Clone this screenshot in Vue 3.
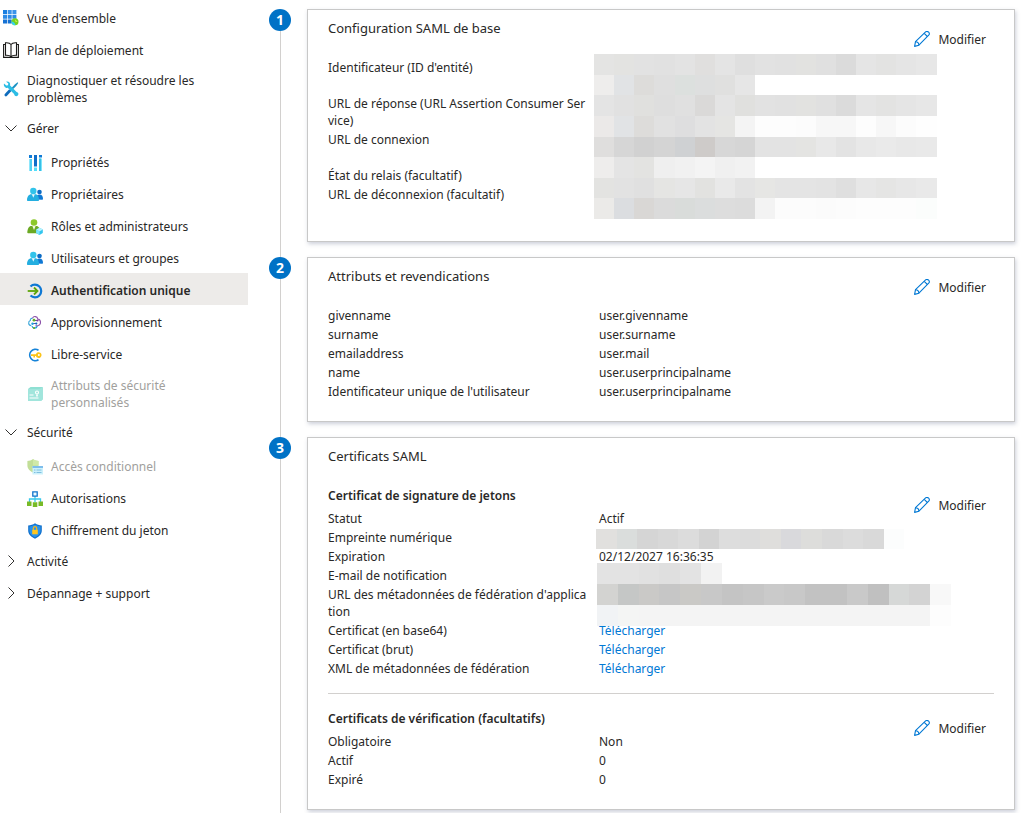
<script setup>
const menu = [
  { label: "Vue d'ensemble", icon: 'grid' },
  { label: 'Plan de déploiement', icon: 'book' },
  { label: 'Diagnostiquer et résoudre les problèmes', icon: 'tools' },
  {
    label: 'Gérer',
    open: true,
    items: [
      { label: 'Propriétés', icon: 'props' },
      { label: 'Propriétaires', icon: 'people' },
      { label: 'Rôles et administrateurs', icon: 'admin' },
      { label: 'Utilisateurs et groupes', icon: 'people' },
      { label: 'Authentification unique', icon: 'sso', active: true },
      { label: 'Approvisionnement', icon: 'provision' },
      { label: 'Libre-service', icon: 'key' },
      { label: 'Attributs de sécurité personnalisés', icon: 'card', disabled: true }
    ]
  },
  {
    label: 'Sécurité',
    open: true,
    items: [
      { label: 'Accès conditionnel', icon: 'access', disabled: true },
      { label: 'Autorisations', icon: 'tree' },
      { label: 'Chiffrement du jeton', icon: 'shield' }
    ]
  },
  { label: 'Activité', open: false, items: [] },
  { label: 'Dépannage + support', open: false, items: [] }
]

function cells(xs, y, height, colors) {
  return colors.split(' ').map((c, i) => ({ x: xs[i], y, w: xs[i + 1] - xs[i], h: height, fill: '#' + c }))
}

const baseX = [0, 20, 40, 60, 81, 101, 121, 141, 161, 181, 202, 222, 242, 262, 282, 302, 322, 343]
const certX = [2, 23, 43, 64, 84, 105, 125, 146, 166, 187, 207, 228, 249, 269, 290, 310]
const urlX = [3, 24, 45, 65, 86, 107, 128, 149, 170, 190, 211, 232, 253, 274, 295, 315, 336, 357]

const baseMask = [
  ...cells(baseX, 0, 21, 'e4e4e3 e3e3e1 e2e2e2 e1e1e1 e3e3e3 e0dfde e4e4e4 dfdfdf e2e2e2 e1e1e1 e2e2e0 e0e0e0 dbdbdb e5e5e5 e3e3e2 e5e5e5 e7e7e7'),
  ...cells(baseX, 21, 20, 'eeedec e1e3e5 dddcda dfdfdf dce0de dedfdf e0e0df e6e6e6 ffffff ffffff ffffff ffffff ffffff ffffff ffffff ffffff ffffff'),
  ...cells(baseX, 41, 21, 'e4e4e4 e1e1e1 e0e0de dedede e0e0e0 dad9d8 e4e4e4 e0e0de e2e2e2 e1e1e1 e2e2e0 e0e0e0 dbdbdb e5e5e5 e3e3e2 e5e5e5 e7e7e7'),
  ...cells(baseX, 62, 21, 'ebe9e8 e1e3e5 dddcda e1e1e1 dededf e3e3e3 e5e5e3 f4f4f4 fdfdfd fdfdfd fcfcfc f7f7f7 f7f7f7 fdfdfd f7f7f7 fcfcfc fefefe'),
  ...cells(baseX, 83, 20, 'dfdedd d6d6d6 d1d1d1 d4d4d4 cfd1d3 cecbc9 d7d7d7 d5d5d5 e3e3e3 e3e3e3 e4e4e2 e8e8e8 e3e3e3 e8e8e8 eaeaea e8e8e8 e9e9e9'),
  ...cells(baseX, 103, 21, 'eeedec e4e4e4 e3e3e1 efefef f1f1f1 f4f4f4 f0f0f0 f2f2f2 ffffff ffffff ffffff ffffff ffffff ffffff ffffff ffffff ffffff'),
  ...cells(baseX, 124, 20, 'e3e3e1 e2e2e2 e0e0e0 e5e5e3 e6e6e6 e2e2e0 e9e9e9 e3e3e3 e6e6e4 e4e4e4 e4e4e4 e3e3e3 dfdfdf e7e7e7 e5e5e4 e7e7e7 e9e9e9'),
  ...cells(baseX, 144, 21, 'ebeae8 dbdde0 d9d7d5 dbdbdb d9dcda dbdddd dddddd dcdcdc f3f3f3 fcfcfc fcfcfc fbfbfb fcfcfc fdfdfd fdfdfd fdfdfd fbfdfc')
]
const certMask = [
  ...cells(certX, 0, 20, 'e1e0de dadddc d5d5d5 d8d8d8 dcdcdc d3d3d3 dddddd dcdcdc dfdedc d9d9dc dddddb d9d9d9 dcdcdc d9d9d9 fcfdfd'),
  ...cells(urlX, 34, 21, 'e3e3e3 e3e3e3 e1e1e1 dfdfdf e3e3e3 f2f2f2'),
  ...cells(urlX, 55, 21, 'd3d3d1 c5c7c6 cac9c7 c6c6c6 cac9c6 c8c8c8 c4c4c4 c6c6c6 cacaca c8c8c8 c2c2c2 c2c2c2 c9c9c9 c0c0c0 d6d8d7 d3d3d3 f8f8f8'),
  ...cells(urlX, 76, 21, 'f1f3f5 f4f5f4 f4f4f4 f4f4f4 f4f4f4 f4f4f4 f4f4f4 f4f4f4 f4f4f4 f4f4f4 f4f4f4 f4f4f4 f4f4f4 f4f4f4 f4f4f4 f4f4f4 fdfdfd')
]

const steps = [
  {
    mask: { name: 'mask-base', width: 343, height: 165, cells: baseMask },
    sections: [
      {
        title: 'Configuration SAML de base',
        rows: [
          { label: "Identificateur (ID d'entité)", tall: true },
          { label: 'URL de réponse (URL Assertion Consumer Service)' },
          { label: 'URL de connexion', tall: true },
          { label: 'État du relais (facultatif)' },
          { label: 'URL de déconnexion (facultatif)', tall: true }
        ]
      }
    ]
  },
  {
    sections: [
      {
        title: 'Attributs et revendications',
        rows: [
          { label: 'givenname', value: 'user.givenname' },
          { label: 'surname', value: 'user.surname' },
          { label: 'emailaddress', value: 'user.mail' },
          { label: 'name', value: 'user.userprincipalname' },
          { label: "Identificateur unique de l'utilisateur", value: 'user.userprincipalname' }
        ]
      }
    ]
  },
  {
    heading: 'Certificats SAML',
    mask: { name: 'mask-cert', width: 357, height: 97, cells: certMask },
    sections: [
      {
        subtitle: 'Certificat de signature de jetons',
        rows: [
          { label: 'Statut', value: 'Actif' },
          { label: 'Empreinte numérique' },
          { label: 'Expiration', value: '02/12/2027 16:36:35' },
          { label: 'E-mail de notification' },
          { label: "URL des métadonnées de fédération d'application" },
          { label: 'Certificat (en base64)', link: 'Télécharger' },
          { label: 'Certificat (brut)', link: 'Télécharger' },
          { label: 'XML de métadonnées de fédération', link: 'Télécharger' }
        ]
      },
      {
        subtitle: 'Certificats de vérification (facultatifs)',
        rows: [
          { label: 'Obligatoire', value: 'Non' },
          { label: 'Actif', value: '0' },
          { label: 'Expiré', value: '0' }
        ]
      }
    ]
  }
]

const icons = {
  grid: `<g fill="#1b7fe0"><path d="M0 0h4v4H0z"/><path d="M4.700 0h4v4h-4zM9.400 0h4v4h-4z" fill="#3a93ea"/><path d="M0 4.700h4v4H0zM4.700 4.700h4v4h-4zM9.400 4.700h4v4h-4z" fill="#2c8ae6"/><path d="M0 9.400h4v4H0zM4.700 9.400h4v4h-4z" fill="#1672d4"/></g><circle cx="12" cy="11.800" r="3.500" fill="#76d31f"/><path d="M8.500 11.400c2 .2 3.800 1.600 4 3.900-2 .4-4.200-1.500-4-3.900z" fill="#32d4f5"/><path d="M11.800 9.500l2.800 2.300-1.900.2z" fill="#d4f35c"/>`,
  book: `<g fill="none" stroke="#1b1a19" stroke-width="1.1"><path d="M8 2.500C7 1 5 .6 2.500.8v12.500c2.500-.2 4.500.2 5.500 1.500 1-1.300 3-1.700 5.500-1.500V.8C11 .6 9 1 8 2.500zM8 2.500v12.300"/><path d="M2.500 2.500H.6v12.900h14.800V2.500h-1.900"/></g>`,
  tools: `<path d="M14.500 1.200l.7.800-2 3-5.600 5.500-1.300-1.300 5.500-5.600z" fill="#1b93c5"/><path d="M6.200 8.300l2 2-4.400 4.800c-1.400 1-3-.7-2-2z" fill="#0f6cbd"/><path d="M1 2.400l2.300 2.200L5 4.200 5.300 2.500 3.200.7c2.300-.7 4.500 1.200 3.900 3.700l6.500 6.500c1.800.1 2.400 2.300 1.200 3.700-1.500 1.200-3.700.4-3.700-1.500L4.700 6.800C2.500 7.400.2 5 1 2.400z" fill="#2dbde5"/>`,
  props: `<path d="M2 0h3v3H2zM12 0h3v2.500h-3z" fill="#0f7ad6"/><path d="M2 4h3v12H2z" fill="#8ee6fb"/><path d="M3 4h2v12H3z" fill="#4fd0f3"/><path d="M7 0h3v11.500H7z" fill="#0f6fc9"/><path d="M7 12.500h3V16H7z" fill="#50e0fb"/><path d="M12 3.500h3V16h-3z" fill="#7ee5fb"/><path d="M12 3.500h2V16h-2z" fill="#38bfe6"/>`,
  people: `<circle cx="12.500" cy="5" r="2.300" fill="#0b6bc5"/><path d="M8.500 12.500c0-3 1.500-5 4-5s3.500 2 3.500 4.300c0 .6-.4 1-1 1z" fill="#0f78d4"/><circle cx="6.300" cy="4" r="3.200" fill="#32c3ea"/><path d="M0 13c0-3.500 2-5.800 4.200-5.800h4c2.500 0 3.800 2.500 3.800 5.800 0 .600-.4 1-1 1H1c-.6 0-1-.4-1-1z" fill="#24aee0"/><path d="M4.800 7.200h3l-1.500 3.600z" fill="#e6faff"/>`,
  admin: `<circle cx="7" cy="3.500" r="3.300" fill="#8cc92b"/><path d="M.3 13.500c0-3.800 1.800-6.500 4-6.500h4.900c2.500 0 3.800 2.700 3.800 6 0 .9-.4 1.300-1 1.300H1.100c-.5 0-.8-.3-.8-.8z" fill="#6ba923"/><path d="M5.300 7h3.400L7 11z" fill="#eff9df"/><path d="M12.500 8.800l3.300 1.800v3.500L12.500 16l-3.300-1.900v-3.500z" fill="#32c5ee"/><path d="M9.200 10.600l3.300-1.800 3.300 1.800-3.300 1.900z" fill="#b8f3ff"/><path d="M9.200 10.600l3.300 1.900V16l-3.300-1.900z" fill="#7fe4fb"/>`,
  sso: `<path d="M3.500 3.500a6.300 6.300 0 1 1 0 9" fill="none" stroke="#0f78d4" stroke-width="2.200"/><path d="M.7 8h9" stroke="#5ea50b" stroke-width="1.800"/><path d="M7 4.500L10.500 8 7 11.500" fill="none" stroke="#5ea50b" stroke-width="1.800"/>`,
  provision: `<g fill="none" stroke-width="1.100"><path d="M5.500 3.500C3.500 3 3.200 4.500 3.300 5.600 1 6.500 1 10.500 4.300 10.600" stroke="#38a5d8"/><path d="M5.500 3.300C6.500.8 10.300 1 10.800 4c3.200.2 3.700 5.200.7 6.600-1 .4-2 .3-3 .3" stroke="#8a4fa8"/><path d="M6.500 5.500h3.500M5.500 8.500h4" stroke="#5c4ea5"/><path d="M5 11c.4 2.700 4.500 3 5.300 0" stroke="#219bd8"/></g><circle cx="7" cy="5.200" r="1.400" fill="#62ad24"/><circle cx="10.500" cy="5.500" r="1.100" fill="#843a9c"/><circle cx="5.500" cy="8.700" r="1.200" fill="#21a5df"/><circle cx="9.300" cy="8.600" r="1.100" fill="#0871c4"/><circle cx="7" cy="13" r="1.100" fill="#62ad24"/>`,
  key: `<path d="M11.500 3.200A5.700 5.700 0 1 0 11.500 12.800" fill="none" stroke="#1683d8" stroke-width="1.700"/><path d="M4 7.200h4.900A2.900 2.900 0 1 1 8.900 9H8v1.500H6.400V9H4z" fill="#fbc318"/><circle cx="11.900" cy="8.100" r="1" fill="#fff"/>`,
  card: `<g opacity=".55"><path d="M3.500 1h11.300c.6 0 1 .4 1 1v11.300L14 15H2c-.6 0-1-.4-1-1V3z" fill="#35c7b0"/><path d="M1 3h11.700L15.800 1v12.300L14 15H2c-.6 0-1-.4-1-1z" fill="#56d0c0"/></g><circle cx="10" cy="6.500" r="1.500" fill="none" stroke="#fff" stroke-width="1.100"/><path d="M9.200 8.400v2.400l.8-.6.800.6V8.400z" fill="#fff"/><path d="M2.500 9h4M2.500 12h9" stroke="#fff" stroke-width="1.200"/>`,
  access: `<g opacity=".5"><path d="M6 0c2 1.500 3.500 1.900 5.500 2v4.500c0 3.300-2.600 5.500-5.500 7-3-1.500-5.600-3.700-5.600-7V2C2.500 1.900 4 1.500 6 0z" fill="#86bf34"/><path d="M6 0c2 1.500 3.500 1.900 5.500 2v4.500H6z" fill="#a3d554"/></g><path d="M5.500 7h10.500v8.500H5.500z" fill="#cdf1fb"/><path d="M5.500 7h10.500v2H5.500z" fill="#7dbdec"/><path d="M7 11h1.500M9.500 11h5M7 13.500h1.500M9.500 13.500h5" stroke="#7fbfe0"/>`,
  tree: `<path d="M8 5v6M2.500 11V8h11v3" fill="none" stroke="#39c9eb" stroke-width="1.300"/><path d="M5.800.8h4.400v4.400H5.800z" fill="#eefaff" stroke="#0f73cc" stroke-width="1.300"/><path d="M0 10.500h4.500V15H0zM5.800 11.300h4.500V16H5.800zM11.500 10.500H16V15h-4.500z" fill="#78ba27"/>`,
  shield: `<path d="M8 .2c2 1.500 4.200 2.100 6.800 2.200v5.200c0 4-3.400 6.600-6.800 8.200C4.600 14.200 1.200 11.600 1.200 7.600V2.400C3.800 2.300 6 1.700 8 .2z" fill="#0f6fcb"/><path d="M8 1.500c1.800 1.200 3.700 1.700 5.600 1.900v4.200c0 3.300-2.800 5.500-5.600 6.900-2.800-1.400-5.600-3.600-5.600-6.900V3.400C4.300 3.200 6.200 2.700 8 1.500z" fill="#2a93ec"/><path d="M6.300 7V5.300a1.700 1.700 0 0 1 3.400 0V7" fill="none" stroke="#f7b718" stroke-width="1.200"/><path d="M5.200 6.800h5.600v4.500H5.200z" fill="#ffc61f"/>`
}
</script>

<template>
  <div class="page">
    <nav class="sidebar" aria-label="Menu de l'application">
      <template v-for="entry in menu" :key="entry.label">
        <a v-if="!entry.items" href="#" class="item">
          <svg class="icon" viewBox="0 0 16 16" aria-hidden="true" v-html="icons[entry.icon]"></svg>
          <span>{{ entry.label }}</span>
        </a>
        <template v-else>
          <button type="button" class="item group" :aria-expanded="entry.open">
            <svg class="icon" viewBox="0 0 16 16" aria-hidden="true">
              <path
                :d="entry.open ? 'M2.500 5.500L8 11l5.500-5.500' : 'M5.500 2.500L11 8l-5.500 5.500'"
                fill="none"
                stroke="#323130"
                stroke-width="1"
              />
            </svg>
            <span>{{ entry.label }}</span>
          </button>
          <div v-if="entry.open" class="children">
            <a
              v-for="item in entry.items"
              :key="item.label"
              href="#"
              class="item child"
              :class="{ active: item.active, disabled: item.disabled }"
              :aria-current="item.active ? 'page' : undefined"
              :aria-disabled="item.disabled ? 'true' : undefined"
            >
              <svg class="icon" viewBox="0 0 16 16" aria-hidden="true" v-html="icons[item.icon]"></svg>
              <span>{{ item.label }}</span>
            </a>
          </div>
        </template>
      </template>
    </nav>

    <main class="main">
      <ol class="steps">
        <li v-for="(step, index) in steps" :key="index" class="step">
          <div class="rail"><span class="badge">{{ index + 1 }}</span></div>
          <article class="card">
            <h2 v-if="step.heading" class="title">{{ step.heading }}</h2>
            <section v-for="(section, s) in step.sections" :key="s" class="section">
              <div class="details">
                <h2 v-if="section.title" class="title">{{ section.title }}</h2>
                <h3 v-else class="subtitle">{{ section.subtitle }}</h3>
                <table>
                  <tbody>
                    <tr v-for="row in section.rows" :key="row.label" :class="{ tall: row.tall }">
                      <th scope="row">{{ row.label }}</th>
                      <td>
                        <a v-if="row.link" href="#">{{ row.link }}</a>
                        <template v-else>{{ row.value }}</template>
                      </td>
                    </tr>
                  </tbody>
                </table>
              </div>
              <button type="button" class="edit">
                <svg class="pencil" viewBox="0 0 16 16" aria-hidden="true">
                  <g fill="none" stroke="#0078d4" stroke-width="1.100" stroke-linejoin="round">
                    <path d="M1.500 10.700L11.600.9c1-.8 2.200-.5 3 .3s1 2 .1 3L4.900 14.200.6 15.400z" />
                    <path d="M10.200 2.300l3.200 3.200M1.500 10.700c2 0 3.300 1.300 3.400 3.500" />
                  </g>
                </svg>
                Modifier
              </button>
            </section>
            <svg
              v-if="step.mask"
              class="mask"
              :class="step.mask.name"
              :width="step.mask.width"
              :height="step.mask.height"
              shape-rendering="crispEdges"
              aria-hidden="true"
            >
              <rect
                v-for="(c, i) in step.mask.cells"
                :key="i"
                :x="c.x"
                :y="c.y"
                :width="c.w"
                :height="c.h"
                :fill="c.fill"
              />
            </svg>
          </article>
        </li>
      </ol>
    </main>
  </div>
</template>

<style>
body {
  margin: 0;
  background: #fff;
}
</style>

<style scoped>
.page {
  display: flex;
  color: #292827;
  font-family: "Noto Sans", "Open Sans", sans-serif;
  font-size: 12px;
  line-height: 17px;
}

.sidebar {
  flex: 0 0 248px;
  padding-top: 2px;
}

.item {
  display: flex;
  align-items: center;
  gap: 8px;
  box-sizing: border-box;
  width: 100%;
  min-height: 32px;
  padding: 6px 48px 6px 3px;
  color: inherit;
  text-decoration: none;
}

.group {
  border: 0;
  background: none;
  font: inherit;
  text-align: left;
  cursor: pointer;
}

.children {
  padding-top: 1px;
}

.child {
  padding-top: 8px;
  padding-bottom: 5px;
  padding-left: 27px;
}

.active {
  background: #edebe9;
  font-weight: 600;
}

.disabled {
  color: #a19f9d;
}

.icon {
  flex: none;
  width: 16px;
  height: 16px;
}

.main {
  flex: 1;
  min-width: 0;
  padding: 9px 6px 0 21px;
}

.steps {
  margin: 0;
  padding: 0;
  list-style: none;
}

.step {
  display: flex;
  gap: 16px;
}

.rail {
  display: flex;
  flex: 0 0 22px;
  flex-direction: column;
}

.rail::after {
  content: "";
  flex: 1;
  width: 1px;
  margin-left: 11px;
  background: #d2d0ce;
}

.badge {
  height: 22px;
  border-radius: 50%;
  background: #0072c6;
  color: #fff;
  font-size: 14px;
  font-weight: 700;
  line-height: 22px;
  text-align: center;
}

.card {
  position: relative;
  flex: 1;
  min-width: 0;
  margin-bottom: 15px;
  padding: 10px 20px 20px;
  border: 1px solid #c8c8c8;
  background: #fff;
  box-shadow: 1px 2px 4px rgba(60, 70, 110, 0.25);
}

.step:last-child .card {
  margin-bottom: 3px;
}

.title,
.subtitle {
  margin: 0;
  font-size: 12px;
  line-height: 19px;
}

.title {
  margin-bottom: 21px;
  font-size: 13px;
  font-weight: 400;
  line-height: 17px;
}

.subtitle {
  margin-bottom: 4px;
  font-weight: 600;
}

.section {
  display: flex;
  align-items: flex-start;
}

.section + .section {
  margin-top: 15px;
  padding-top: 15px;
  border-top: 1px solid #d2d0ce;
}

.details {
  flex: 1;
  min-width: 0;
}

table {
  width: 100%;
  border-collapse: collapse;
  table-layout: fixed;
}

th,
td {
  padding: 1px 0;
  text-align: left;
  vertical-align: top;
}

th {
  width: 260px;
  padding-right: 11px;
  font-weight: 400;
  word-break: break-all;
}

tr {
  height: 19px;
}

.tall {
  height: 36px;
}

td a {
  color: #0078d4;
  text-decoration: none;
}

.edit {
  display: flex;
  align-items: center;
  gap: 8px;
  height: 32px;
  margin-top: 3px;
  padding: 0 8px;
  border: 0;
  background: none;
  color: inherit;
  font: inherit;
  cursor: pointer;
}

.pencil {
  width: 16px;
  height: 16px;
}

.mask {
  position: absolute;
}

.mask-base {
  top: 44px;
  left: 286px;
}

.mask-cert {
  top: 91px;
  left: 286px;
}
</style>
